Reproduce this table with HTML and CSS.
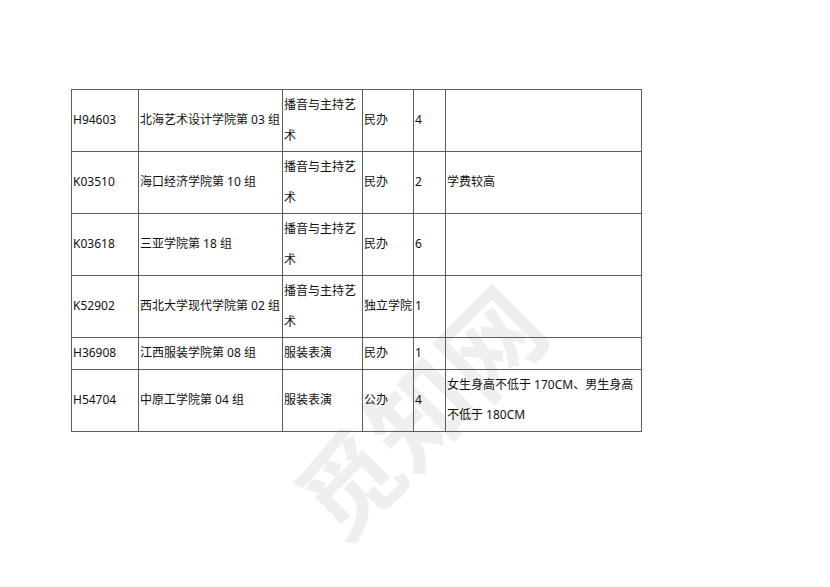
FILE: index.html
```html
<!DOCTYPE html>
<html lang="zh">
<head>
<meta charset="utf-8">
<title>专业表</title>
<link rel="stylesheet" href="styles.css">
</head>
<body>
<div class="page">
  <table class="grid">
    <colgroup>
      <col class="c-code">
      <col class="c-school">
      <col class="c-major">
      <col class="c-type">
      <col class="c-num">
      <col class="c-note">
    </colgroup>
    <tbody>
      <tr>
        <td>H94603</td>
        <td>北海艺术设计学院第 03 组</td>
        <td>播音与主持艺术</td>
        <td>民办</td>
        <td>4</td>
        <td></td>
      </tr>
      <tr>
        <td>K03510</td>
        <td>海口经济学院第 10 组</td>
        <td>播音与主持艺术</td>
        <td>民办</td>
        <td>2</td>
        <td>学费较高</td>
      </tr>
      <tr>
        <td>K03618</td>
        <td>三亚学院第 18 组</td>
        <td>播音与主持艺术</td>
        <td>民办</td>
        <td>6</td>
        <td></td>
      </tr>
      <tr>
        <td>K52902</td>
        <td>西北大学现代学院第 02 组</td>
        <td>播音与主持艺术</td>
        <td>独立学院</td>
        <td>1</td>
        <td></td>
      </tr>
      <tr>
        <td>H36908</td>
        <td>江西服装学院第 08 组</td>
        <td>服装表演</td>
        <td>民办</td>
        <td>1</td>
        <td></td>
      </tr>
      <tr>
        <td>H54704</td>
        <td>中原工学院第 04 组</td>
        <td>服装表演</td>
        <td>公办</td>
        <td>4</td>
        <td>女生身高不低于 170CM、男生身高不低于 180CM</td>
      </tr>
    </tbody>
  </table>
  <div class="watermark">觅知网</div>
</div>
</body>
</html>
```

FILE: styles.css
```css
html, body {
  margin: 0;
  padding: 0;
  background: #ffffff;
}

.page {
  position: relative;
  width: 830px;
  height: 587px;
  overflow: hidden;
  padding: 89px 0 0 71px;
  box-sizing: border-box;
  font-family: "Noto Sans", "Noto Sans CJK SC", sans-serif;
  font-size: 12px;
  color: #111111;
}

.grid {
  border-collapse: collapse;
  table-layout: fixed;
  width: 570px;
  position: relative;
  z-index: 1;
}

.c-code { width: 67px; }
.c-school { width: 144px; }
.c-major { width: 80px; }
.c-type { width: 51px; }
.c-num { width: 32px; }
.c-note { width: 196px; }

.grid td {
  border: 1px solid #5e5e5e;
  padding: 0 0 0 1px;
  line-height: 30.5px;
  vertical-align: middle;
  text-align: left;
  word-break: break-all;
}

.watermark {
  position: absolute;
  left: 267px;
  top: 360px;
  width: 300px;
  font-size: 100px;
  line-height: 100px;
  font-weight: 700;
  font-family: "Noto Sans CJK SC", sans-serif;
  color: #000000;
  opacity: 0.06;
  white-space: nowrap;
  transform: rotate(-45deg);
  pointer-events: none;
  z-index: 0;
}
```
